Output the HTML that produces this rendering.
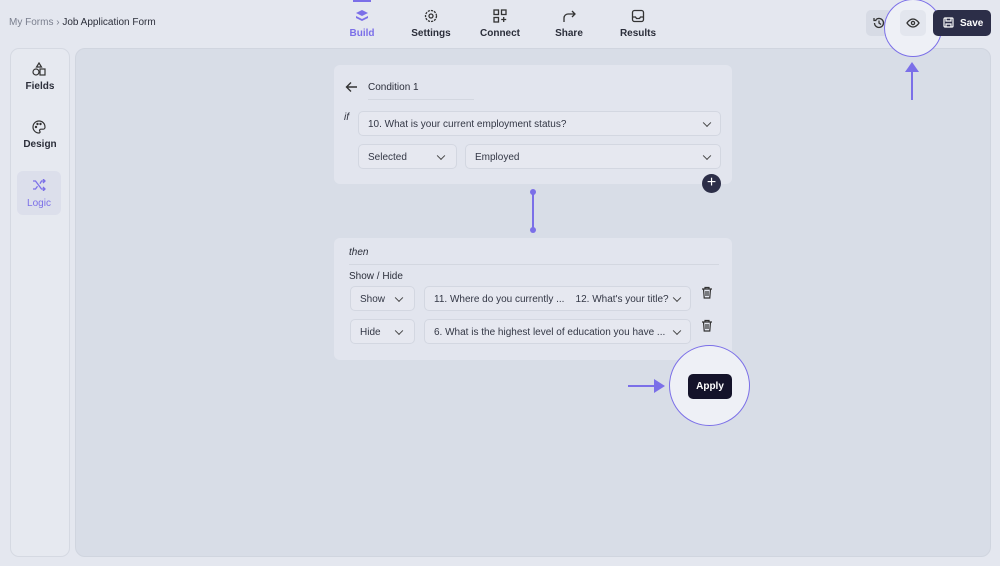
<!DOCTYPE html><html><head><style>
*{box-sizing:border-box;margin:0;padding:0}
body{width:1000px;height:566px;background:#e4e7ef;font-family:"Liberation Sans",sans-serif;position:relative;overflow:hidden;color:#2b2e3a}
.a{position:absolute}
.sel{position:absolute;background:#e6e8f0;border:1px solid #d3d7e1;border-radius:5px;font-size:10px;color:#333745;padding-left:9px;padding-top:1px;display:flex;align-items:center}
.chev{position:absolute;right:10px;top:50%;width:6px;height:6px;border-right:1.3px solid #444;border-bottom:1.3px solid #444;transform:translateY(-70%) rotate(45deg)}
.nav{position:absolute;top:9px;text-align:center;font-size:10px;font-weight:bold;color:#2b2e3a}
.nav svg{display:block;margin:0 auto 5px}
</style></head><body>
<div class="a" style="left:9px;top:17px;font-size:10px;color:#7a7f8e">My Forms › <span style="color:#2b2e3a">Job Application Form</span></div>
<div class="a" style="left:353px;top:0;width:18px;height:2px;background:#7b6fe8"></div>
<div class="nav" style="left:347px;width:30px;color:#7b6fe8"><svg width="14" height="14" viewBox="0 0 14 14" fill="#7b6fe8"><path d="M7 1l6 3-6 3-6-3z"/><path d="M1 7l6 3 6-3v2l-6 3-6-3z"/></svg>Build</div>
<div class="nav" style="left:410px;width:42px"><svg width="14" height="14" viewBox="0 0 14 14" fill="none" stroke="#333" stroke-width="1.3"><circle cx="7" cy="7" r="2"/><circle cx="7" cy="7" r="5.5" stroke-dasharray="2.2 1"/></svg>Settings</div>
<div class="nav" style="left:478px;width:44px"><svg width="14" height="14" viewBox="0 0 14 14" fill="none" stroke="#333" stroke-width="1.3"><rect x="1" y="1" width="4.5" height="4.5"/><rect x="8.5" y="1" width="4.5" height="4.5"/><rect x="1" y="8.5" width="4.5" height="4.5"/><path d="M10.7 8v5M8.2 10.5h5"/></svg>Connect</div>
<div class="nav" style="left:553px;width:32px"><svg width="14" height="14" viewBox="0 0 14 14" fill="none" stroke="#333" stroke-width="1.3"><path d="M2 13V9a4 4 0 014-4h7M10 2l3 3-3 3"/></svg>Share</div>
<div class="nav" style="left:618px;width:40px"><svg width="14" height="14" viewBox="0 0 14 14" fill="none" stroke="#333" stroke-width="1.3"><rect x="1.5" y="1.5" width="11" height="11" rx="2"/><path d="M1.5 8h3l1 1.5h3l1-1.5h3"/></svg>Results</div>
<div class="a" style="left:75px;top:48px;width:916px;height:509px;border-radius:10px;background:#d8dde7;border:1px solid #d0d5df"></div>
<div class="a" style="left:866px;top:10px;width:26px;height:26px;background:#d7dbe5;border-radius:5px"></div>
<svg class="a" style="left:872px;top:16px" width="14" height="14" viewBox="0 0 14 14" fill="none" stroke="#333" stroke-width="1.3"><path d="M2.5 7a4.5 4.5 0 101.3-3.2M2 2v2.5h2.5M7 4.5V7l2 1.5"/></svg>
<div class="a" style="left:884px;top:-1px;width:58px;height:58px;border-radius:50%;background:#eef0f6;border:1.5px solid #7b6fe8"></div>
<div class="a" style="left:900px;top:10px;width:26px;height:26px;background:#e3e6ee;border-radius:5px"></div>
<svg class="a" style="left:906px;top:17px" width="14" height="12" viewBox="0 0 14 12" fill="none" stroke="#333" stroke-width="1.3"><path d="M1 6s2.5-4 6-4 6 4 6 4-2.5 4-6 4-6-4-6-4z"/><circle cx="7" cy="6" r="1.6"/></svg>
<div class="a" style="left:933px;top:10px;width:58px;height:26px;background:#2c2e48;border-radius:5px;color:#fff;font-size:10px;font-weight:bold;display:flex;align-items:center;padding-left:27px">Save</div>
<svg class="a" style="left:943px;top:17px" width="11" height="11" viewBox="0 0 11 11" fill="none" stroke="#fff" stroke-width="1.2"><rect x="1" y="1" width="9" height="9" rx="1"/><path d="M3 1v3h5V1M3 10V7h5v3"/></svg>
<div class="a" style="left:911px;top:70px;width:2px;height:30px;background:#7b6fe8"></div>
<div class="a" style="left:905px;top:62px;width:0;height:0;border-left:7px solid transparent;border-right:7px solid transparent;border-bottom:10px solid #7b6fe8"></div>
<div class="a" style="left:10px;top:48px;width:60px;height:509px;border:1px solid #d5d9e2;border-radius:9px;background:#e6e9f0"></div>
<svg class="a" style="left:32px;top:62px" width="14" height="14" viewBox="0 0 14 14" fill="none" stroke="#333" stroke-width="1.2"><path d="M7 1l2.5 4h-5z"/><circle cx="4" cy="10" r="3"/><rect x="8" y="7" width="5" height="6"/></svg>
<div class="a" style="left:10px;top:81px;width:60px;text-align:center;font-size:10px;font-weight:bold">Fields</div>
<svg class="a" style="left:32px;top:120px" width="14" height="14" viewBox="0 0 14 14" fill="none" stroke="#333" stroke-width="1.2"><path d="M7 1a6 6 0 100 12c1 0 1.3-1 .8-1.8-.6-.9 0-2 1-2H11a2 2 0 002-2C13 3.5 10.3 1 7 1z"/><circle cx="4" cy="7" r=".6"/><circle cx="5.5" cy="4" r=".6"/><circle cx="8.5" cy="4" r=".6"/></svg>
<div class="a" style="left:10px;top:139px;width:60px;text-align:center;font-size:10px;font-weight:bold">Design</div>
<div class="a" style="left:17px;top:171px;width:44px;height:44px;border-radius:6px;background:#dcdfeb"></div>
<svg class="a" style="left:32px;top:179px" width="14" height="12" viewBox="0 0 14 12" fill="none" stroke="#7b6fe8" stroke-width="1.3"><path d="M1 2h2.5l6 8H13M1 10h2.5l2-2.7M8 4.7L9.5 2H13M11 0l2 2-2 2M11 8l2 2-2 2"/></svg>
<div class="a" style="left:17px;top:198px;width:44px;text-align:center;font-size:10px;color:#7b6fe8">Logic</div>
<div class="a" style="left:334px;top:65px;width:398px;height:119px;border-radius:6px;background:#e2e5ee"></div>
<svg class="a" style="left:345px;top:81px" width="13" height="12" viewBox="0 0 13 12" fill="none" stroke="#333" stroke-width="1.4"><path d="M12 6H1.5M6 1.5L1.5 6 6 10.5"/></svg>
<div class="a" style="left:368px;top:82px;font-size:10px">Condition 1</div>
<div class="a" style="left:368px;top:99px;width:106px;height:1px;background:#d3d7e0"></div>
<div class="a" style="left:344px;top:112px;font-size:10px;font-style:italic">if</div>
<div class="sel" style="left:358px;top:111px;width:363px;height:25px">10. What is your current employment status?<span class="chev"></span></div>
<div class="sel" style="left:358px;top:144px;width:99px;height:25px">Selected<span class="chev" style="right:12px"></span></div>
<div class="sel" style="left:465px;top:144px;width:256px;height:25px">Employed<span class="chev"></span></div>
<div class="a" style="left:702px;top:174px;width:19px;height:19px;border-radius:50%;background:#2c2e48;color:#fff;font-size:16px;line-height:18px;text-align:center">+</div>
<div class="a" style="left:532px;top:192px;width:2px;height:38px;background:#7b6fe8"></div>
<div class="a" style="left:530px;top:189px;width:6px;height:6px;border-radius:50%;background:#7b6fe8"></div>
<div class="a" style="left:530px;top:227px;width:6px;height:6px;border-radius:50%;background:#7b6fe8"></div>
<div class="a" style="left:334px;top:238px;width:398px;height:122px;border-radius:6px;background:#e2e5ee"></div>
<div class="a" style="left:349px;top:247px;font-size:10px;font-style:italic">then</div>
<div class="a" style="left:349px;top:264px;width:370px;height:1px;background:#d3d7e0"></div>
<div class="a" style="left:349px;top:271px;font-size:10px">Show / Hide</div>
<div class="sel" style="left:350px;top:286px;width:65px;height:25px">Show<span class="chev" style="right:12px"></span></div>
<div class="sel" style="left:424px;top:286px;width:267px;height:25px">11. Where do you currently ... &nbsp;&nbsp;&nbsp;12. What's your title?<span class="chev"></span></div>
<div class="sel" style="left:350px;top:319px;width:65px;height:25px">Hide<span class="chev" style="right:12px"></span></div>
<div class="sel" style="left:424px;top:319px;width:267px;height:25px">6. What is the highest level of education you have ...<span class="chev"></span></div>
<svg class="a" style="left:701px;top:286px" width="12" height="13" viewBox="0 0 12 13" fill="none" stroke="#333" stroke-width="1.2"><path d="M1 3h10M4 3V1.5h4V3M2.5 3l.7 9h5.6l.7-9M5 5v5M7 5v5"/></svg>
<svg class="a" style="left:701px;top:319px" width="12" height="13" viewBox="0 0 12 13" fill="none" stroke="#333" stroke-width="1.2"><path d="M1 3h10M4 3V1.5h4V3M2.5 3l.7 9h5.6l.7-9M5 5v5M7 5v5"/></svg>
<div class="a" style="left:669px;top:345px;width:81px;height:81px;border-radius:50%;background:#eef0f6;border:1.5px solid #7b6fe8"></div>
<div class="a" style="left:688px;top:374px;width:44px;height:25px;border-radius:5px;background:#14132a;color:#fff;font-size:10px;font-weight:bold;text-align:center;line-height:25px">Apply</div>
<div class="a" style="left:628px;top:385px;width:28px;height:2px;background:#7b6fe8"></div>
<div class="a" style="left:654px;top:379px;border-top:7px solid transparent;border-bottom:7px solid transparent;border-left:11px solid #7b6fe8"></div>
</body></html>
